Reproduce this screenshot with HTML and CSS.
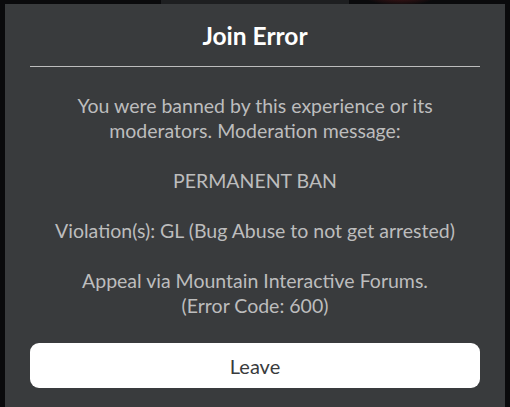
FILE: index.html
```html
<!DOCTYPE html>
<html lang="en">
<head>
    <meta charset="UTF-8">
    <title>Join Error</title>
    <link rel="stylesheet" href="styles.css">
</head>
<body>
    <div class="backdrop">
        <div class="top-bar"></div>
        <div class="glow"></div>
    </div>
    <div class="dialog">
        <h2 class="title">Join Error</h2>
        <div class="divider"></div>
        <div class="message">
            <p>You were banned by this experience or its<br>moderators. Moderation message:</p>
            <p>PERMANENT BAN</p>
            <p>Violation(s): GL (Bug Abuse to not get arrested)</p>
            <p>Appeal via Mountain Interactive Forums.<br>(Error Code: 600)</p>
        </div>
        <button class="leave-btn">Leave</button>
    </div>
</body>
</html>
```

FILE: styles.css
```css
body {
    margin: 0;
    width: 510px;
    height: 407px;
    overflow: hidden;
    background: #0a0a0c;
    font-family: Lato, sans-serif;
    position: relative;
}
.backdrop .top-bar {
    position: absolute;
    left: 161px;
    top: 0;
    width: 188px;
    height: 4px;
    background: #1e1f21;
}
.backdrop .glow {
    position: absolute;
    left: 360px;
    top: -20px;
    width: 80px;
    height: 26px;
    border-radius: 50%;
    background: radial-gradient(ellipse, #5a1a1c 0%, rgba(40, 10, 12, 0) 70%);
}
.dialog {
    position: absolute;
    left: 5px;
    top: 4px;
    width: 500px;
    height: 403px;
    background: #393b3d;
    box-sizing: border-box;
    padding: 0 25px;
    display: flex;
    flex-direction: column;
}
.title {
    margin: 0;
    height: 62px;
    line-height: 64px;
    text-align: center;
    color: #ffffff;
    font-size: 24.5px;
    font-weight: bold;
}
.divider {
    height: 1px;
    background: #bdbdbd;
}
.message {
    color: #bdbdbd;
    font-size: 19.5px;
    line-height: 25px;
    text-align: center;
    padding-top: 26px;
}
.message p {
    margin: 0 0 25px;
}
.message p:last-child {
    margin: 0;
}
.leave-btn {
    margin-top: 25px;
    height: 45px;
    border: none;
    border-radius: 9px;
    background: #ffffff;
    color: #393b3d;
    font-family: Lato, sans-serif;
    font-size: 20px;
}
```
